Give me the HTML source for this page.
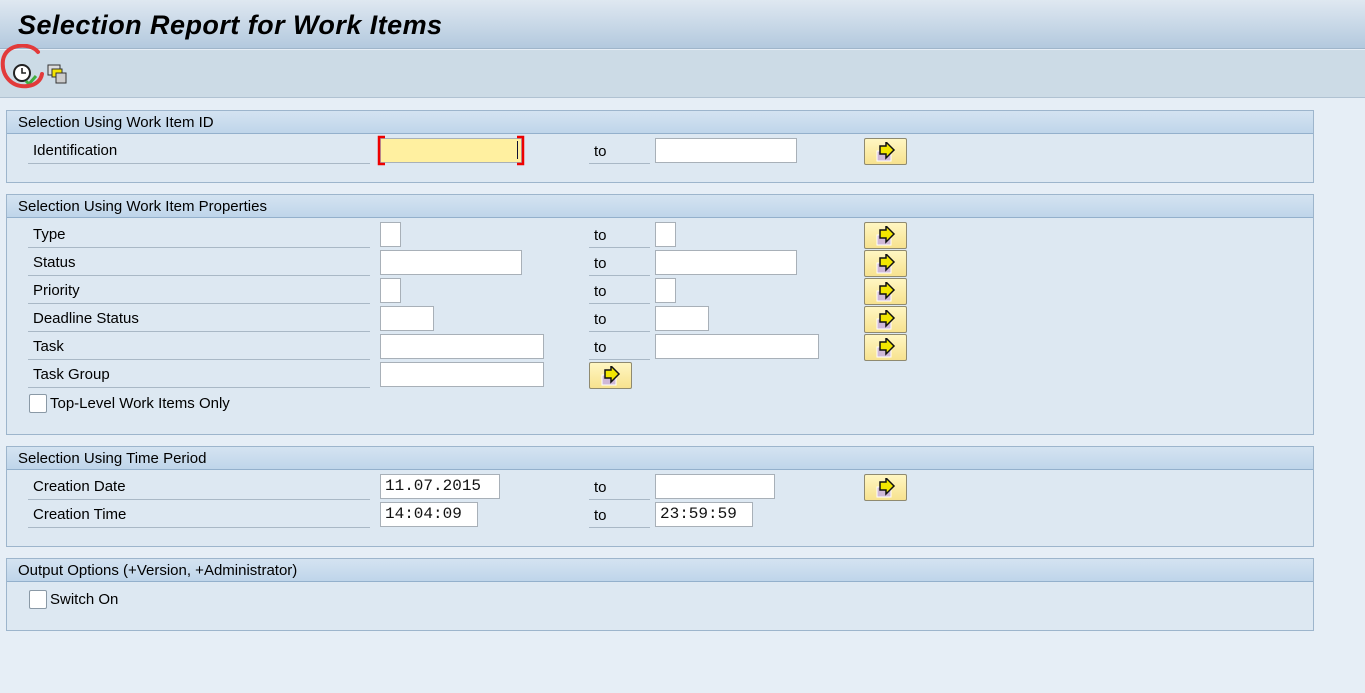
<!DOCTYPE html>
<html><head><meta charset="utf-8"><style>
*{margin:0;padding:0;box-sizing:border-box}
body{width:1365px;height:693px;background:#e6eef6;font-family:"Liberation Sans",sans-serif;font-size:15px;color:#000;position:relative;overflow:hidden}
.a{position:absolute}
#title{left:0;top:0;width:1365px;height:49px;background:linear-gradient(#dfe8f1,#b3c9de);border-bottom:1px solid #9fb5ca}
#title span{position:absolute;left:18px;top:10px;font-size:27px;font-weight:bold;font-style:italic;letter-spacing:0.45px}
#tb{left:0;top:50px;width:1365px;height:48px;background:#ccdbe6;border-bottom:1px solid #b0c2d2}
.panel{position:absolute;left:6px;width:1308px;background:#dde8f2;border:1px solid #9db5cc}
.ph{height:23px;background:linear-gradient(#d4e3f1,#bfd5ea);border-bottom:1px solid #93b0cc;padding:3px 0 0 11px}
.lbl{position:absolute;left:21px;width:342px;height:28px;border-bottom:1px solid #a9b8c6;padding:6px 0 0 5px}
.to{position:absolute;left:589px;width:61px;height:28px;border-bottom:1px solid #a9b8c6;padding:7px 0 0 5px}
.in{position:absolute;height:25px;background:#fff;border:1px solid #a8b0b8;font-family:"Liberation Mono",monospace;font-size:16px;padding:2px 0 0 4px;color:#111}
.btn{position:absolute;width:43px;height:27px;background:linear-gradient(#fff6c2,#f7e28f);border:1px solid #8f8a70;border-radius:2px}
.btn svg{position:absolute;left:11px;top:3px}
.cb{position:absolute;left:22px;width:18px;height:19px;background:#fff;border:1px solid #8a99a6;border-radius:2px}
.cbt{position:absolute;left:43px}
</style></head><body>
<div id="title" class="a"><span>Selection Report for Work Items</span></div>
<div id="tb" class="a">
<svg class="a" style="left:12px;top:13px" width="26" height="22"><circle cx="10" cy="10" r="8" fill="#fff" stroke="#222" stroke-width="2"/><path d="M10 5v5h4" stroke="#222" stroke-width="1.6" fill="none"/><path d="M14 18l3 3 7-8" stroke="#3fae3f" stroke-width="3" fill="none"/></svg>
<svg class="a" style="left:0;top:-6px" width="50" height="50"><path d="M38 8 C30 -2 6 -1 3 16 C1 32 12 44 28 42 C36 41 41 36 42 30" fill="none" stroke="#e23a3a" stroke-width="4" stroke-linecap="round"/></svg>
<svg class="a" style="left:47px;top:14px" width="22" height="22"><rect x="1" y="1" width="12" height="10" fill="#ddd" stroke="#333"/><rect x="5" y="5" width="10" height="8" fill="#f4e400" stroke="#333"/><rect x="9" y="9" width="10" height="10" fill="#ccc" stroke="#333"/></svg>
</div>

<div class="panel" style="top:110px;height:73px"><div class="ph">Selection Using Work Item ID</div>
<div class="lbl" style="top:25px">Identification</div></div>
<div class="panel" style="top:194px;height:241px"><div class="ph">Selection Using Work Item Properties</div>
<div class="lbl" style="top:25px">Type</div><div class="lbl" style="top:53px">Status</div><div class="lbl" style="top:81px">Priority</div><div class="lbl" style="top:109px">Deadline Status</div><div class="lbl" style="top:137px">Task</div><div class="lbl" style="top:165px">Task Group</div>
<div class="cb" style="top:199px"></div><div class="cbt" style="top:200px">Top-Level Work Items Only</div></div>
<div class="panel" style="top:446px;height:101px"><div class="ph">Selection Using Time Period</div>
<div class="lbl" style="top:25px">Creation Date</div><div class="lbl" style="top:53px">Creation Time</div></div>
<div class="panel" style="top:558px;height:73px"><div class="ph">Output Options (+Version, +Administrator)</div>
<div class="cb" style="top:31px"></div><div class="cbt" style="top:32px">Switch On</div></div>

<div class="to" style="top:136px">to</div>
<div class="to" style="top:220px">to</div><div class="to" style="top:248px">to</div><div class="to" style="top:276px">to</div><div class="to" style="top:304px">to</div><div class="to" style="top:332px">to</div>
<div class="to" style="top:472px">to</div><div class="to" style="top:500px">to</div>

<div class="in" style="left:380px;top:138px;width:142px;background:#fff0a0"></div>
<div class="a" style="left:517px;top:141px;width:1px;height:18px;background:#113"></div>
<svg class="a" style="left:377px;top:135px" width="148" height="31"><path d="M8 2H2V29H8M140 2H146V29H140" fill="none" stroke="#e00" stroke-width="2.5"/></svg>
<div class="in" style="left:655px;top:138px;width:142px"></div>
<div class="in" style="left:380px;top:222px;width:21px"></div><div class="in" style="left:655px;top:222px;width:21px"></div>
<div class="in" style="left:380px;top:250px;width:142px"></div><div class="in" style="left:655px;top:250px;width:142px"></div>
<div class="in" style="left:380px;top:278px;width:21px"></div><div class="in" style="left:655px;top:278px;width:21px"></div>
<div class="in" style="left:380px;top:306px;width:54px"></div><div class="in" style="left:655px;top:306px;width:54px"></div>
<div class="in" style="left:380px;top:334px;width:164px"></div><div class="in" style="left:655px;top:334px;width:164px"></div>
<div class="in" style="left:380px;top:362px;width:164px"></div>
<div class="in" style="left:380px;top:474px;width:120px">11.07.2015</div><div class="in" style="left:655px;top:474px;width:120px"></div>
<div class="in" style="left:380px;top:502px;width:98px">14:04:09</div><div class="in" style="left:655px;top:502px;width:98px">23:59:59</div>

<svg width="0" height="0" style="position:absolute"><defs><g id="ar"><rect x="1" y="9" width="14" height="10" fill="#cfb8d8" stroke="#fff"/><path d="M4 4h6V0l8 8-8 8v-4H4z" fill="#f2e600" stroke="#111" stroke-width="1.5"/></g></defs></svg>
<div class="btn" style="left:864px;top:138px"><svg width="20" height="20"><use href="#ar"/></svg></div>
<div class="btn" style="left:864px;top:222px"><svg width="20" height="20"><use href="#ar"/></svg></div>
<div class="btn" style="left:864px;top:250px"><svg width="20" height="20"><use href="#ar"/></svg></div>
<div class="btn" style="left:864px;top:278px"><svg width="20" height="20"><use href="#ar"/></svg></div>
<div class="btn" style="left:864px;top:306px"><svg width="20" height="20"><use href="#ar"/></svg></div>
<div class="btn" style="left:864px;top:334px"><svg width="20" height="20"><use href="#ar"/></svg></div>
<div class="btn" style="left:589px;top:362px"><svg width="20" height="20"><use href="#ar"/></svg></div>
<div class="btn" style="left:864px;top:474px"><svg width="20" height="20"><use href="#ar"/></svg></div>
</body></html>
